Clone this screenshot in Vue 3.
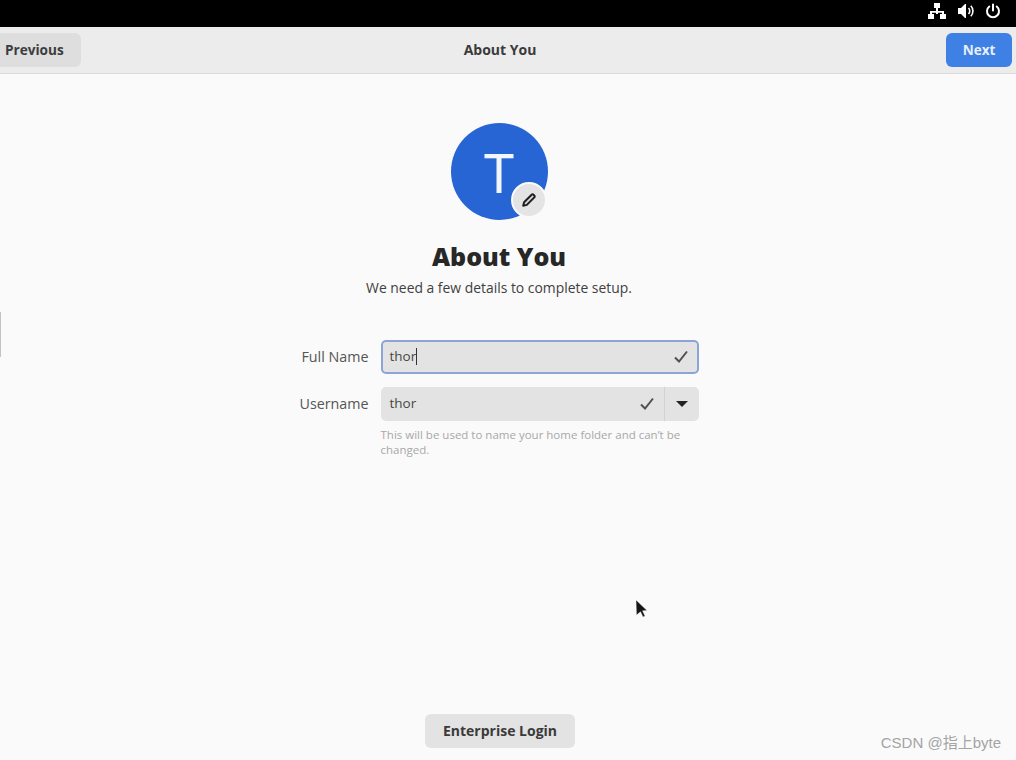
<script setup>
const fields = [
  { label: 'Full Name', value: 'thor', focused: true },
  { label: 'Username', value: 'thor', focused: false },
]
</script>

<template>
  <div class="screen">
    <div class="topbar">
      <svg class="tray-icon" width="20" height="18" viewBox="0 0 20 18">
        <path fill="#fff" d="M7 1h6v5H7zM9 6h2v3h6v3h-2v-1.200H11V12H9v-1.200H5V12H3V9h6z" />
        <path fill="#fff" d="M1 12h6v5H1zM13 12h6v5h-6z" />
      </svg>
      <svg class="tray-icon" width="18" height="16" viewBox="0 0 18 16">
        <path fill="#fff" d="M1 5h3l4-4h1v14H8l-4-4H1z" />
        <path fill="none" stroke="#fff" stroke-width="1.600" d="M11.500 5a4.200 4.200 0 0 1 0 6M13.800 2.800a7.400 7.400 0 0 1 0 10.400" />
      </svg>
      <svg class="tray-icon last" width="16" height="16" viewBox="0 0 16 16">
        <path fill="none" stroke="#fff" stroke-width="2" stroke-linecap="round" d="M8 1.500v6M4.300 3.500a6 6 0 1 0 7.400 0" />
      </svg>
    </div>

    <header class="header">
      <button class="btn previous">Previous</button>
      <span class="title">About You</span>
      <button class="btn next">Next</button>
    </header>

    <main class="content">
      <div class="avatar">
        <span class="initial">T</span>
        <span class="edit">
          <svg width="16" height="16" viewBox="0 0 16 16">
            <path fill="#d8d8d8" stroke="#1f1f1f" stroke-width="2" stroke-linejoin="round" d="M2.200 13.800l.9-3.600 7.500-7.500a1.300 1.300 0 0 1 1.900 0l.8.800a1.300 1.300 0 0 1 0 1.900l-7.500 7.500z" />
          </svg>
        </span>
      </div>

      <h1 class="heading">About You</h1>
      <p class="sub">We need a few details to complete setup.</p>

      <div class="form">
        <template v-for="f in fields" :key="f.label">
          <label class="label">{{ f.label }}</label>
          <div class="field" :class="{ focused: f.focused }">
            <span class="value">{{ f.value }}<i v-if="f.focused" class="caret"></i></span>
            <svg class="check" width="16" height="14" viewBox="0 0 16 14">
              <path fill="none" stroke="#505050" stroke-width="2" d="M2 7.500l4 4 8-10" />
            </svg>
            <span v-if="!f.focused" class="drop"><i class="arrow"></i></span>
          </div>
        </template>
        <p class="hint">This will be used to name your home folder and can’t be changed.</p>
      </div>

      <button class="btn enterprise">Enterprise Login</button>
    </main>

    <i class="edge"></i>
    <svg class="cursor" width="14" height="20" viewBox="0 0 14 20">
      <path fill="#161616" stroke="#fff" stroke-opacity=".6" stroke-width=".6" d="M1 1l11 10.500-4.500.3 2.500 5.200-2 1-2.500-5.300L1.500 16z" />
    </svg>
    <span class="mark">CSDN @指上byte</span>
  </div>
</template>

<style>
html, body { margin: 0; background: #fafafa; }
</style>

<style scoped>
.screen {
  position: relative;
  width: 1016px;
  height: 760px;
  overflow: hidden;
  display: flex;
  flex-direction: column;
  background: #fafafa;
  font-family: "Open Sans", "Noto Sans", sans-serif;
  color: #2e3436;
}
.topbar {
  height: 27px;
  flex: none;
  box-sizing: border-box;
  background: #000;
  display: flex;
  justify-content: flex-end;
  align-items: center;
  gap: 10px;
  padding: 0 15px 5px 0;
}
.tray-icon { display: block; }
.header {
  height: 47px;
  flex: none;
  box-sizing: border-box;
  background: #ececec;
  border-bottom: 1px solid #dcdcdc;
  display: grid;
  grid-template-columns: 1fr auto 1fr;
  align-items: center;
  padding-right: 16px;
}
.title {
  font-size: 14px;
  line-height: 19px;
  font-weight: 700;
  color: #3a3a3a;
  margin-bottom: 2px;
}
.btn {
  border: 0;
  border-radius: 6px;
  font-family: inherit;
  font-size: 14px;
  font-weight: 700;
  padding: 0;
}
.previous {
  justify-self: start;
  width: 81px;
  height: 34px;
  background: #dedede;
  color: #3d3d3d;
  text-align: left;
  padding: 0 0 2px 5px;
  border-radius: 0 6px 6px 0;
  font-size: 13.600px;
}
.next {
  justify-self: end;
  margin-right: -12px;
  width: 66px;
  height: 34px;
  background: #3f80e4;
  color: #e6effa;
  font-size: 13.500px;
}
.content {
  flex: 1;
  display: flex;
  flex-direction: column;
  align-items: center;
  padding-top: 49px;
  padding-right: 18px;
}
.avatar {
  position: relative;
  width: 97px;
  height: 97px;
  border-radius: 50%;
  background: #2765d4;
  display: flex;
  align-items: center;
  justify-content: center;
}
.initial {
  color: #f2f5fb;
  font-size: 54px;
  line-height: 1;
  font-family: "Noto Sans", sans-serif;
  font-weight: 400;
  margin-top: 1px;
}
.edit {
  position: absolute;
  right: 1px;
  bottom: 2px;
  width: 36px;
  height: 36px;
  box-sizing: border-box;
  border-radius: 50%;
  background: #e4e4e4;
  border: 2px solid #fafafa;
  display: flex;
  align-items: center;
  justify-content: center;
}
.heading {
  margin: 19px 0 0;
  font-size: 25px;
  line-height: 34px;
  font-weight: 800;
  color: #272727;
}
.sub {
  margin: 5px 0 0;
  font-size: 13.900px;
  line-height: 20px;
  color: #3f3f3f;
}
.form {
  margin: 42px 0 0;
  display: grid;
  grid-template-columns: 69px 318px;
  column-gap: 12px;
  row-gap: 13px;
  align-items: center;
}
.label {
  text-align: right;
  font-size: 14.300px;
  color: #555;
  white-space: nowrap;
  margin-bottom: 2px;
}
.field {
  height: 34px;
  box-sizing: border-box;
  background: #e3e3e3;
  border-radius: 5px;
  display: flex;
  align-items: center;
  padding-left: 9px;
  font-size: 13.500px;
  color: #474747;
}
.field.focused {
  border: 2px solid #8ba6d6;
  padding: 0 8px 0 7px;
}
.value { flex: 1; display: flex; align-items: center; margin-bottom: 2px; }
.caret {
  display: block;
  width: 1px;
  height: 17px;
  background: #333;
}
.check { flex: none; }
.field:not(.focused) .check { margin-right: 9px; }
.drop {
  width: 35px;
  height: 100%;
  flex: none;
  border-left: 1px solid #d2d2d2;
  box-sizing: border-box;
  display: flex;
  align-items: center;
  justify-content: center;
}
.arrow {
  width: 0;
  height: 0;
  border-left: 6px solid transparent;
  border-right: 6px solid transparent;
  border-top: 6px solid #222;
}
.hint {
  grid-column: 2;
  margin: -7px 0 0;
  font-size: 11.500px;
  line-height: 15px;
  color: #a8a8a8;
  width: 312px;
}
.enterprise {
  margin-top: auto;
  margin-bottom: 12px;
  margin-left: 2px;
  width: 150px;
  height: 34px;
  padding-bottom: 2px;
  background: #e3e3e3;
  color: #3a3a3a;
}
.edge {
  position: absolute;
  left: 0;
  top: 312px;
  width: 1px;
  height: 45px;
  background: #c4c4c4;
}
.cursor {
  position: absolute;
  left: 635px;
  top: 599px;
}
.mark {
  position: absolute;
  right: 15px;
  top: 733px;
  font-family: "Liberation Sans", "Noto Sans CJK SC", sans-serif;
  font-size: 15px;
  line-height: 20px;
  color: #a4a4a4;
}
</style>
